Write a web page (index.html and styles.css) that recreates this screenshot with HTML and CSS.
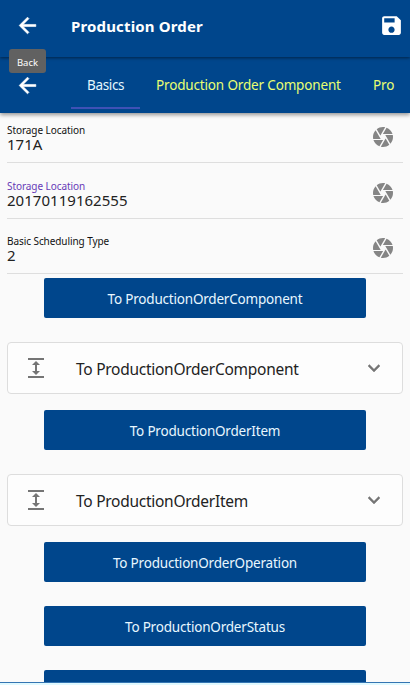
FILE: index.html
```
<!DOCTYPE html>
<html lang="en">
<head>
<meta charset="utf-8">
<title>Production Order</title>
<link rel="stylesheet" href="styles.css">
</head>
<body>
<svg class="defs" aria-hidden="true">
  <symbol id="back" viewBox="0 0 24 24"><path d="M20 11H7.83l5.59-5.59L12 4l-8 8 8 8 1.41-1.41L7.83 13H20v-2z"/></symbol>
  <symbol id="save" viewBox="0 0 24 24"><path d="M17 3H5c-1.11 0-2 .9-2 2v14c0 1.1.89 2 2 2h14c1.1 0 2-.9 2-2V7l-4-4zm-5 16c-1.66 0-3-1.34-3-3s1.34-3 3-3 3 1.34 3 3-1.34 3-3 3zm3-10H5V5h10v4z"/></symbol>
  <symbol id="camera" viewBox="0 0 24 24"><path d="M9.4 10.5l4.77-8.26C13.47 2.09 12.75 2 12 2c-2.4 0-4.6.85-6.32 2.25l3.66 6.35.06-.1zM21.54 9c-.92-2.92-3.15-5.26-6-6.34L11.88 9h9.66zm.26 1h-7.49l.29.5 4.76 8.25C21 16.97 22 14.61 22 12c0-.69-.07-1.35-.2-2zM8.54 12l-3.9-6.75C3.01 7.03 2 9.39 2 12c0 .69.07 1.35.2 2h7.49l-1.15-2zm-6.08 3c.92 2.92 3.15 5.26 6 6.34L12.12 15H2.46zm11.27 0l-3.9 6.76c.7.15 1.42.24 2.17.24 2.4 0 4.6-.85 6.32-2.25l-3.66-6.35-.93 1.6z"/></symbol>
  <symbol id="expand" viewBox="0 0 24 24"><path d="M4 20h16v2H4zM4 2h16v2H4zm9 7h3l-4-4-4 4h3v6H8l4 4 4-4h-3z"/></symbol>
  <symbol id="chevron" viewBox="0 0 24 24"><path d="M7.41 8.59 12 13.17l4.59-4.58L18 10l-6 6-6-6z"/></symbol>
</svg>
<div class="app">
  <header class="toolbar">
    <svg class="icon back"><use href="#back"/></svg>
    <h1 class="title">Production Order</h1>
    <svg class="icon save"><use href="#save"/></svg>
    <span class="tooltip">Back</span>
  </header>
  <nav class="tabs">
    <svg class="icon back"><use href="#back"/></svg>
    <div class="strip">
      <a class="tab active"><span class="t-basics">Basics</span></a>
      <a class="tab"><span class="t-comp">Production Order Component</span></a>
      <a class="tab last"><span class="t-pro">Pro</span></a>
    </div>
  </nav>
  <main>
    <div class="field"><div><label>Storage Location</label><p>171A</p></div><svg class="icon"><use href="#camera"/></svg></div>
    <div class="field focus"><div><label>Storage Location</label><p>20170119162555</p></div><svg class="icon"><use href="#camera"/></svg></div>
    <div class="field short"><div><label>Basic Scheduling Type</label><p>2</p></div><svg class="icon"><use href="#camera"/></svg></div>
    <button class="btn">To ProductionOrderComponent</button>
    <section class="panel"><svg class="icon"><use href="#expand"/></svg><span>To ProductionOrderComponent</span><svg class="icon"><use href="#chevron"/></svg></section>
    <button class="btn">To ProductionOrderItem</button>
    <section class="panel"><svg class="icon"><use href="#expand"/></svg><span>To ProductionOrderItem</span><svg class="icon"><use href="#chevron"/></svg></section>
    <button class="btn">To ProductionOrderOperation</button>
    <button class="btn next">To ProductionOrderStatus</button>
    <button class="btn next"></button>
  </main>
  <footer></footer>
</div>
</body>
</html>
```
FILE: styles.css
```
* { box-sizing: border-box; }
body { margin: 0; font-family: "Noto Sans", "Open Sans", sans-serif; color: #222; background: #fafafa; }
.defs { position: absolute; width: 0; height: 0; }
.app { display: flex; flex-direction: column; width: 410px; height: 685px; overflow: hidden; }
.icon { width: 24px; height: 24px; flex: none; fill: currentColor; }
.toolbar { position: relative; z-index: 2; display: flex; align-items: center; height: 57px; flex: none; padding: 0 6px 7px 15px; background: #00468c; color: #fff; box-shadow: 0 1px 3px rgba(0,0,0,.5); }
.icon.back { width: 25px; height: 25px; stroke: currentColor; stroke-width: .6px; }
.title { flex: 1; margin: 2px 0 0 31px; font-size: 15px; line-height: 22px; font-weight: 700; letter-spacing: .15px; }
.icon.save { width: 25px; height: 25px; }
.tooltip { position: absolute; left: 9px; top: 49px; width: 37px; height: 24px; border-radius: 3px; background: #616161; font-size: 9.5px; line-height: 27px; text-align: center; }
.tabs { position: relative; z-index: 1; display: flex; align-items: center; height: 56px; flex: none; padding: 0 15px; background: #00468c; color: #fff; box-shadow: 0 2px 4px rgba(0,0,0,.4); }
.strip { display: flex; flex: 1; margin-left: 31px; height: 56px; overflow: hidden; }
.tab { flex: none; height: 52px; padding: 0 16px; font-size: 13.5px; line-height: 57px; white-space: nowrap; color: #e9ff72; }
.tab.last { padding-right: 0; }
.tab span { display: block; }
.tab.active { width: 69px; color: #e4f7ff; border-bottom: 2px solid #3f51b5; }
.t-basics { letter-spacing: -.35px; }
.t-comp { width: 185px; letter-spacing: -.16px; }
.t-pro { letter-spacing: -.1px; }
main { flex: 1; min-height: 0; overflow: hidden; padding: 0 7px; }
.field { display: flex; justify-content: space-between; align-items: flex-start; height: 56px; padding-right: 8px; border-bottom: 1px solid #dedede; }
.field:first-child { height: 50px; }
.field > div { padding-top: 17px; }
.field:first-child > div { padding-top: 11px; }
.field.short { height: 55px; }
.field .icon { margin-top: 18px; color: #858585; }
.field:first-child .icon { margin-top: 12px; }
.field.short > div { padding-top: 16px; }
.field.short .icon { margin-top: 17px; }
label { display: block; font-size: 10px; line-height: 13px; letter-spacing: -.07px; color: #111; }
.focus label { color: #673ab7; }
.field p { margin: 0; font-size: 15px; line-height: 15px; letter-spacing: .03px; }
.btn { display: block; width: 322px; height: 40px; margin: 4px 0 0 37px; padding: 2px 0 0; border: 0; border-radius: 2px; background: #00468c; color: #e8f7ff; font-family: inherit; font-size: 13.5px; line-height: 20px; letter-spacing: -.2px; text-align: center; }
.panel { display: flex; align-items: center; height: 52px; margin-top: 24px; padding: 0 16px; border: 1px solid #ddd; border-radius: 4px; background: #fdfdfd; }
.panel .icon { color: #757575; }
.panel .icon:last-child { stroke: currentColor; stroke-width: .4px; }
.panel span { flex: 1; margin-left: 28px; padding-top: 2px; font-size: 15.5px; line-height: 22px; letter-spacing: -.27px; }
.panel + .btn { margin-top: 16px; }
.btn.next { margin-top: 24px; }
footer { flex: none; height: 3px; background: #e0f9ff; border-top: 1px solid #3475b3; }
```
